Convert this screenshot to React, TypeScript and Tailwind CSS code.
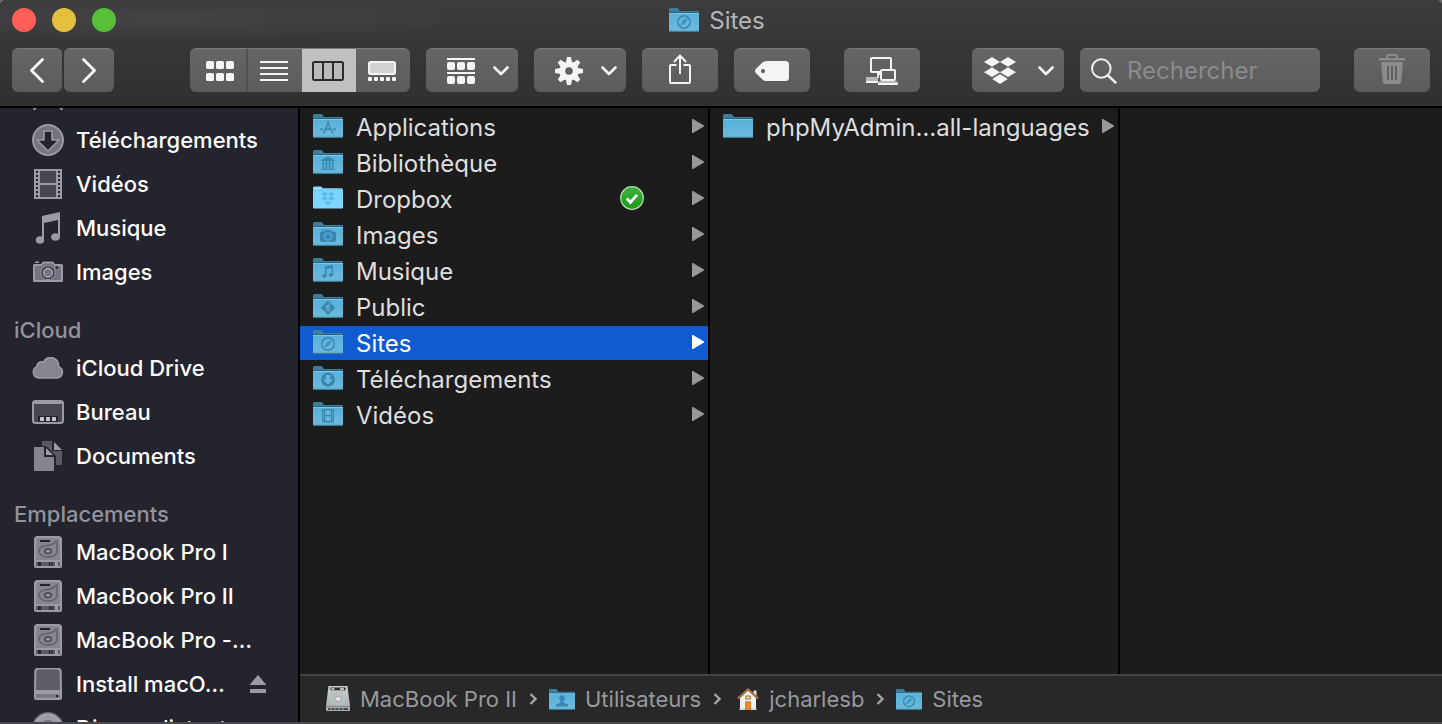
import type { ReactNode } from "react";

type Emblem =
  | "apps" | "library" | "dropbox" | "camera" | "music"
  | "public" | "compass" | "download" | "film" | "user" | "none";

function SharedGradients() {
  return (
    <svg width="0" height="0" className="absolute" aria-hidden="true">
      <defs>
        <linearGradient id="folderFront" x1="0" y1="0" x2="0" y2="1">
          <stop offset="0" stopColor="#55b1da" />
          <stop offset="0.85" stopColor="#6bb9db" />
          <stop offset="1" stopColor="#5aa0c0" />
        </linearGradient>
        <linearGradient id="folderBright" x1="0" y1="0" x2="0" y2="1">
          <stop offset="0" stopColor="#78d3fd" />
          <stop offset="1" stopColor="#80d7ff" />
        </linearGradient>
        <linearGradient id="syncGreen" x1="0" y1="0" x2="0" y2="1">
          <stop offset="0" stopColor="#3db43a" />
          <stop offset="1" stopColor="#1f961f" />
        </linearGradient>
        <linearGradient id="diskMetal" x1="0" y1="0" x2="0" y2="1">
          <stop offset="0" stopColor="#c9cfd0" />
          <stop offset="1" stopColor="#a4acad" />
        </linearGradient>
      </defs>
    </svg>
  );
}

function EmblemShape({ kind }: { kind: Emblem }) {
  const ink = "#3a86b3";
  switch (kind) {
    case "apps":
      return (
        <g stroke={ink} strokeWidth="1.5" fill="none">
          <path d="M16 7.5 10.5 19.5M14 7.5 20 19.5M7 15.2h3.4M12 15.2h6M20 15.2h3" />
        </g>
      );
    case "library":
      return (
        <g fill={ink}>
          <path d="M15 6.4 22 10.2v1H8v-1z" />
          <path d="M9.5 12h1.7v6H9.5zM12.6 12h1.7v6h-1.7zM15.7 12h1.7v6h-1.7zM18.8 12h1.7v6h-1.7zM8.3 18.5h13.4V20H8.3z" />
        </g>
      );
    case "dropbox":
      return (
        <path
          fill="#5bb8e6"
          d="M11.7 6 15 8.1 11.7 10.2 8.4 8.1zM18.3 6l3.3 2.1-3.3 2.1L15 8.1zM11.7 10.5 15 12.600l-3.300 2.100-3.300-2.100zM18.300 10.500l3.300 2.100-3.300 2.100-3.300-2.100zM15 14.700l3.300 2.100-3.300 2.100-3.300-2.100z"
        />
      );
    case "camera":
      return (
        <g>
          <path fill={ink} d="M8.5 9.5H11l1.5-1.8h5L19 9.5h2.500q1.500 0 1.500 1.500v7.500q0 1.500-1.500 1.500h-13Q7 20 7 18.500V11q0-1.500 1.500-1.500z" />
          <path fill={ink} d="M8.500 7.500h2.200v1H8.500z" />
          <circle cx="15" cy="14.600" r="3.600" fill="none" stroke="#64b5da" strokeWidth="1.200" />
        </g>
      );
    case "music":
      return (
        <g fill={ink}>
          <path d="M12 8.600 20 7v9.500h-1.400v-6.200l-5.200 1V18H12z" />
          <ellipse cx="11.400" cy="18" rx="2.200" ry="1.900" />
          <ellipse cx="17.900" cy="16.800" rx="2.200" ry="1.900" />
        </g>
      );
    case "public":
      return (
        <g>
          <path fill={ink} d="M15 6.500 22.300 13.800 15 21.100 7.700 13.800z" />
          <path d="m12.500 17.500 2-2.500.4-3.300-2.600 1.200M15 12l2.200 1.400M14.800 15l2.500 2.700" stroke="#62b2d8" strokeWidth="1.200" fill="none" />
          <circle cx="15.800" cy="10.200" r="1" fill="#62b2d8" />
        </g>
      );
    case "compass":
      return (
        <g fill="none" stroke={ink}>
          <circle cx="15" cy="14" r="6.200" strokeWidth="1.500" />
          <path d="m17.800 11-3.700 2.100-2 3.900 3.700-2.100z" strokeWidth="1" />
          <circle cx="15" cy="14" r=".5" fill={ink} />
        </g>
      );
    case "download":
      return (
        <g>
          <circle cx="15" cy="13.800" r="7" fill={ink} />
          <path fill="#67b8dc" d="M13 9h4v4.400h3L15 18.600l-5-5.200h3z" />
        </g>
      );
    case "film":
      return (
        <g>
          <path fill={ink} d="M9 7h12v13.500H9z" />
          <path fill="#62b5db" d="M12.200 8.200h5.600v4.700h-5.600zM12.200 14.200h5.600v4.900h-5.600z" />
          <path d="M10.500 8v12M19.500 8v12" stroke="#62b5db" strokeWidth="1.200" strokeDasharray="1.300 1.300" />
        </g>
      );
    case "user":
      return (
        <path fill={ink} d="M15 7.200c2 0 3.100 1.500 3.100 3.500 0 1.500-.7 2.700-1.500 3.500v1.400l4.200 1.700c.9.500 1.200 1.300 1.300 2.700H7.900c.1-1.400.4-2.200 1.300-2.700l4.200-1.700v-1.400c-.8-.8-1.500-2-1.500-3.500 0-2 1.100-3.500 3.100-3.500z" />
      );
    default:
      return null;
  }
}

function Folder({ emblem, small = false }: { emblem: Emblem; small?: boolean }) {
  const bright = emblem === "dropbox";
  return (
    <svg viewBox="0 0 30 24" className={small ? "h-[21px] w-[26px] shrink-0" : "h-6 w-[30px] shrink-0"} aria-hidden="true">
      {bright ? (
        <>
          <path fill="#8adcff" d="M0 2q0-1.500 1.500-1.500h6.500L10 2.300h18.500Q30 2.300 30 3.800V12H0z" />
          <path fill="url(#folderBright)" d="M0 4h30v17.500q0 1-1 1H1q-1 0-1-1z" />
          <path fill="#4e9fc8" d="M0 4h9l2-1h19v.8H11.500L9.500 4.800H0z" opacity=".45" />
        </>
      ) : (
        <>
          <path fill="#3f7d9d" d="M0 1.500Q0 0 1.500 0H8q1 0 1.700 1L10.800 3H29q1 0 1 1v6H0z" />
          <path fill="#2f617c" d="M0 4h30v1.200H0z" />
          <path fill="url(#folderFront)" d="M0 5h30v17.500q0 1.500-1.500 1.500h-27Q0 24 0 22.500z" />
          <path fill="#7ac9ea" d="M0 5h30v1H0z" />
          <path fill="#3f7a97" d="M0 22.600q0 1.400 1.500 1.400h27q1.500 0 1.500-1.400v.1q-.5.400-1.500.4h-27q-1 0-1.500-.4z" />
        </>
      )}
      <EmblemShape kind={emblem} />
    </svg>
  );
}

function Chevron() {
  return (
    <svg viewBox="0 0 16 10" className="h-[10px] w-4" aria-hidden="true">
      <path d="m1.500 1.500 6.500 6.500 6.500-6.500" fill="none" stroke="#f4f4f6" strokeWidth="2.600" strokeLinecap="round" strokeLinejoin="round" />
    </svg>
  );
}

const toolStyle =
  "flex h-11 shrink-0 items-center justify-center rounded-md border-t border-[#7a7a7c] bg-linear-to-b from-[#656567] to-[#5c5c5e]";

function ToolButton({ label, className, children }: { label: string; className: string; children: ReactNode }) {
  return (
    <button type="button" aria-label={label} className={`${toolStyle} ${className}`}>
      {children}
    </button>
  );
}

function Toolbar() {
  const ink = "#f4f4f6";
  return (
    <div className="flex items-center px-3">
      <div className="mr-[76px] flex gap-0.5">
        <ToolButton label="Précédent" className="w-[50px]">
          <svg viewBox="0 0 50 44" className="h-11 w-[50px]">
            <path d="M30.500 10.500 19.500 21.500l11 11" fill="none" stroke="#fff" strokeWidth="2.800" strokeLinecap="round" strokeLinejoin="round" />
          </svg>
        </ToolButton>
        <ToolButton label="Suivant" className="w-[50px]">
          <svg viewBox="0 0 50 44" className="h-11 w-[50px]">
            <path d="m19.500 10.500 11 11-11 11" fill="none" stroke="#fff" strokeWidth="2.800" strokeLinecap="round" strokeLinejoin="round" />
          </svg>
        </ToolButton>
      </div>

      <div className={`${toolStyle} mr-4 overflow-hidden`} role="group" aria-label="Présentation">
        <button type="button" aria-label="Icônes" className="flex h-11 w-[58px] items-center justify-center border-r-2 border-[#515153]">
          <svg viewBox="0 0 28 20" className="ml-1 h-5 w-7" fill={ink}>
            {[0, 10, 20].map((x) =>
              [0, 12].map((y) => <rect key={`${x}-${y}`} x={x} y={y} width="8" height="8" rx="1.500" />),
            )}
          </svg>
        </button>
        <button type="button" aria-label="Liste" className="flex h-11 w-[54px] items-center justify-center pr-0.5">
          <svg viewBox="0 0 28 20" className="h-5 w-7" fill={ink}>
            {[0, 6, 12, 18].map((y) => <rect key={y} y={y} width="28" height="2" />)}
          </svg>
        </button>
        <button type="button" aria-label="Colonnes" aria-pressed="true" className="flex h-11 w-[54px] items-center justify-center bg-[#c0c0c2] pr-0.5">
          <svg viewBox="0 0 32 20" className="h-5 w-8">
            <rect x="1" y="1" width="30" height="18" rx="1.500" fill="#b9b9bb" stroke="#2b2b2d" strokeWidth="2" />
            <path d="M11 1v18M21 1v18" stroke="#2b2b2d" strokeWidth="2" />
          </svg>
        </button>
        <button type="button" aria-label="Galerie" className="flex h-11 w-[54px] items-center justify-center pr-0.5">
          <svg viewBox="0 0 28 20" className="h-5 w-7">
            <rect x="1" y="1" width="26" height="12" rx="1.500" fill="#d3d3d5" stroke={ink} strokeWidth="2" />
            {[0, 6, 12, 18, 24].map((x) => <rect key={x} x={x} y="16" width="4" height="4" rx="1" fill={ink} />)}
          </svg>
        </button>
      </div>

      <ToolButton label="Regrouper" className="mr-4 w-[92px] gap-[18px]">
        <svg viewBox="0 0 28 26" className="ml-3 h-[26px] w-7" fill={ink}>
          <path d="M0 0h28v2H0zM0 14h28v2H0z" />
          {[0, 10, 20].map((x) =>
            [4, 18].map((y) => <rect key={`${x}-${y}`} x={x} y={y} width="8" height="8" rx="2" />),
          )}
        </svg>
        <Chevron />
      </ToolButton>

      <ToolButton label="Actions" className="mr-4 w-[92px] gap-[18px]">
        <svg viewBox="-14 -14 28 28" className="ml-3 h-7 w-7">
          {[0, 45, 90, 135].map((a) => (
            <path key={a} d="M-2-14h4L3-9V9L2 14h-4L-3 9V-9z" fill={ink} transform={`rotate(${a})`} />
          ))}
          <circle r="9.600" fill={ink} />
          <circle r="3.800" fill="#606062" />
        </svg>
        <Chevron />
      </ToolButton>

      <ToolButton label="Partager" className="mr-4 w-[76px]">
        <svg viewBox="0 0 24 30" className="mb-1 h-[30px] w-6" fill="none" stroke={ink} strokeWidth="2" strokeLinejoin="round">
          <path d="M8.500 11H3q-1 0-1 1v16q0 1 1 1h18q1 0 1-1V12q0-1-1-1h-5.500" />
          <path d="M12 20V1.500M6 8l6-6.500L18 8" />
        </svg>
      </ToolButton>

      <ToolButton label="Tags" className="mr-[34px] w-[76px]">
        <svg viewBox="0 0 34 20" className="h-5 w-[34px]">
          <path fill={ink} fillRule="evenodd" d="M11 0h19.500Q34 0 34 3.500v13Q34 20 30.500 20H11q-2 0-3.500-1.500L1 12.200Q-1 10 1 7.800L7.500 1.500Q9 0 11 0zM8 8a2.100 2.100 0 1 0 0 4.200A2.100 2.100 0 0 0 8 8z" />
        </svg>
      </ToolButton>

      <ToolButton label="Se connecter au serveur" className="mr-[52px] w-[76px]">
        <svg viewBox="0 0 32 28" className="h-7 w-8">
          <rect x="5" y="1" width="20" height="14" rx="1" fill="none" stroke={ink} strokeWidth="2" />
          <path fill={ink} d="M11 16h4v2h-2v3h-2z" />
          <path fill="#b9b9bb" d="M0 20h12v4H0z" />
          <path fill={ink} d="M0 24h12v2H0z" />
          <rect x="15" y="13" width="14" height="10" rx="1" fill="#616163" stroke={ink} strokeWidth="2" />
          <path fill="#b9b9bb" d="M13.500 24h17l1.500 2H12z" />
          <path fill={ink} d="M12 26h20v2H12z" />
        </svg>
      </ToolButton>

      <ToolButton label="Dropbox" className="mr-4 w-[92px] gap-[22px]">
        <svg viewBox="0 0 32 27" className="ml-0.5 h-[27px] w-8" fill={ink}>
          <path d="M8 0 16 5 8 9.700 0 5zM24 0l8 5-8 4.700L16 5zM8 10.300l8 4.900-8 4.800-8-4.800zM24 10.300l8 4.900-8 4.800-8-4.800zM16 17l7.800 5L16 27l-7.800-5z" />
        </svg>
        <Chevron />
      </ToolButton>

      <label className={`${toolStyle} mr-[34px] min-w-0 flex-1 gap-2.5 px-[11px]`}>
        <svg viewBox="0 0 26 26" className="h-[26px] w-[26px] shrink-0" fill="none" stroke="#ededef">
          <circle cx="10.300" cy="10.500" r="9.300" strokeWidth="2" />
          <path d="m17 17.500 7.500 7" strokeWidth="2.400" strokeLinecap="round" />
        </svg>
        <input
          type="search"
          aria-label="Rechercher"
          placeholder="Rechercher"
          className="w-full min-w-0 bg-transparent text-2xl text-white outline-none placeholder:text-[#8b8b8d]"
        />
      </label>

      <ToolButton label="Placer dans la corbeille" className="w-[76px]">
        <svg viewBox="0 0 26 30" className="mb-1 h-[30px] w-[26px]">
          <path d="M8 5V3q0-2 2-2h6q2 0 2 2v2" fill="none" stroke="#8b8b8d" strokeWidth="2" />
          <path fill="#8b8b8d" d="M0 4h26v2.500H0zM2 8h22l-1.800 20q-.2 2-2.200 2H6q-2 0-2.200-2z" />
          <path d="M9 12v14M13 12v14M17 12v14" stroke="#606062" strokeWidth="2" />
        </svg>
      </ToolButton>
    </div>
  );
}

const side = "#9c9ba5";

function DownloadIcon() {
  return (
    <svg viewBox="0 0 32 32" className="h-8 w-8">
      <circle cx="16" cy="16" r="15" fill="#757581" stroke={side} strokeWidth="2" />
      <path d="M12 7h8v9h7L16 27 5 16h7z" fill="#24242e" stroke={side} strokeWidth="1.600" strokeLinejoin="round" />
    </svg>
  );
}

function FilmIcon() {
  return (
    <svg viewBox="0 0 28 30" className="h-[30px] w-7">
      <path fill={side} d="M0 0h28v30H0z" />
      <path fill="#474751" d="M6 2h16v12H6zM6 16h16v12H6z" />
      <path d="M3 2v26M25 2v26" stroke="#24242e" strokeWidth="2" strokeDasharray="2 2" />
    </svg>
  );
}

function MusicIcon() {
  return (
    <svg viewBox="0 0 26 32" className="h-8 w-[26px]" fill={side}>
      <path d="M7 4 25 0v25h-2V8L9 11v16H7z" />
      <ellipse cx="5" cy="28" rx="4.200" ry="3.800" />
      <ellipse cx="20.500" cy="25" rx="4.500" ry="3.800" />
    </svg>
  );
}

function CameraIcon() {
  return (
    <svg viewBox="0 0 30 22" className="h-[22px] w-[30px]">
      <path fill={side} d="M1.500 3H8l2-2.500h10L22 3h6.500Q30 3 30 4.500v15q0 1.500-1.500 1.500h-27Q0 21 0 19.500v-15Q0 3 1.500 3z" />
      <path fill="#757581" d="M2 5h6.500l2-2.500h9L22 5h6v14H2z" />
      <path fill={side} d="M2 .5h4v1.500H2z" />
      <circle cx="15" cy="11.700" r="7" fill="#24242e" stroke={side} strokeWidth="1" />
      <circle cx="15" cy="11.700" r="4.400" fill="#757581" stroke={side} strokeWidth="2" />
      <circle cx="24" cy="6.500" r="1.200" fill="#24242e" />
    </svg>
  );
}

function CloudIcon() {
  return (
    <svg viewBox="0 0 32 22" className="h-[22px] w-8">
      <path d="M7 21A6 6 0 0 1 4.800 9.600 A4.800 4.800 0 0 1 11.300 5.200 A8 8 0 0 1 26.500 9.800 A5.800 5.800 0 0 1 25.500 21z" fill="#858590" stroke={side} strokeWidth="1.600" />
    </svg>
  );
}

function DesktopIcon() {
  return (
    <svg viewBox="0 0 32 24" className="h-6 w-8">
      <rect x="1" y="1" width="30" height="22" rx="2.500" fill="#474751" stroke={side} strokeWidth="2" />
      <path fill={side} d="M2 1h28v3H2z" />
      <path fill="#24242e" d="M6 16h20v6H6z" />
      <path fill="#c3c3cb" d="M8 17h4v4H8zM14 17h4v4h-4zM20 17h4v4h-4z" />
    </svg>
  );
}

function DocumentsIcon() {
  return (
    <svg viewBox="0 0 28 30" className="h-[30px] w-7">
      <path fill="#5a5a65" d="M8 0h10v10h10v14H8z" />
      <path fill={side} d="m20 1 8 8h-8z" />
      <path fill="#24242e" d="M0 5h12l10 10v15H0z" />
      <path fill="#858590" d="M0 6h10v10h10v14H0z" />
      <path fill={side} d="m12 7 7 7h-7z" />
    </svg>
  );
}

function HardDiskIcon() {
  return (
    <svg viewBox="0 0 28 32" className="h-8 w-7">
      <path fill={side} d="M3.500 0h21Q28 0 28 3.500V30q0 2-2 2H2q-2 0-2-2V3.500Q0 0 3.500 0z" />
      <path fill="#858590" d="M4.500 2h19Q25.500 2 25.600 4L26 24H2L2.400 4Q2.500 2 4.500 2z" />
      <path fill="#24242e" d="M6 4h10v2H6z" />
      <path d="M23 5v10c0 4-4 6-9 6s-9-2.500-9-6 4-5.500 9-5.500q3 0 9-4.500z" fill="none" stroke="#63636e" strokeWidth="1.600" strokeLinejoin="round" />
      <ellipse cx="14" cy="15.200" rx="3.200" ry="2.200" fill={side} stroke="#4f4f5a" strokeWidth="1.800" />
      <path fill="#5a5a65" d="M2 26h24v4H2z" />
      <path fill="#24242e" d="M4 26h3v4H4zM15 26h1.300v4H15zM17.500 26h1.300v4h-1.300z" />
      <path fill={side} d="M21 26h3v4h-3z" />
    </svg>
  );
}

function ExternalDiskIcon() {
  return (
    <svg viewBox="0 0 28 32" className="h-8 w-7">
      <path fill={side} d="M3.500 0h21q3 0 3.200 3L28 24v6q0 2-2 2H2q-2 0-2-2v-6L.3 3q.2-3 3.200-3z" />
      <path fill="#5e5e69" d="M4.500 1.500h19q1.900 0 2 1.500l.5 19H2L2.500 3q.1-1.500 2-1.500z" />
      <path fill="#7b7b86" d="M2 26h24v3.500q0 .5-1 .5H3q-1 0-1-.5z" />
      <path fill="#24242e" d="M22 27h2v2h-2z" />
    </svg>
  );
}

function DiscIcon() {
  return (
    <svg viewBox="0 0 32 32" className="h-8 w-8">
      <circle cx="16" cy="16" r="15.300" fill={side} stroke="#6a6a75" strokeWidth="1.400" />
      <circle cx="16" cy="16" r="13.500" fill="none" stroke="#b0b0b8" strokeWidth="1" />
      <circle cx="16" cy="16" r="7" fill="#3d3d48" stroke="#757581" strokeWidth="2" />
    </svg>
  );
}

function AppsIcon() {
  return (
    <svg viewBox="0 0 32 32" className="h-8 w-8" fill="none" stroke={side} strokeWidth="2">
      <path d="M19 2 2 30M13 2l17 28M2 20h28" />
    </svg>
  );
}

function SideRow({ icon, label, ejectable = false }: { icon: ReactNode; label?: string; ejectable?: boolean }) {
  return (
    <li className="flex h-11 items-center pl-8 pr-[31px]">
      <span className="mr-3 flex w-8 shrink-0 justify-center">{icon}</span>
      {label && <a href="#" className="min-w-0 flex-1 whitespace-nowrap text-[22px] font-medium text-white">{label}</a>}
      {ejectable && (
        <button type="button" aria-label="Éjecter">
          <svg viewBox="0 0 18 18" className="h-[18px] w-[18px]" fill={side}>
            <path d="M9 0 17.500 10H.5zM1 14h16v4H1z" />
          </svg>
        </button>
      )}
    </li>
  );
}

function SideHeading({ children }: { children: ReactNode }) {
  return <h2 className="flex h-[52px] items-end pb-0.5 pl-3.5 text-[22px] leading-7 font-medium text-[#94939d]">{children}</h2>;
}

function Sidebar() {
  return (
    <nav aria-label="Barre latérale" className="w-[300px] shrink-0 overflow-hidden border-r-2 border-black bg-[#24242e]">
      <div className="-mt-[34px]">
        <ul>
          <SideRow icon={<AppsIcon />} />
          <SideRow icon={<DownloadIcon />} label="Téléchargements" />
          <SideRow icon={<FilmIcon />} label="Vidéos" />
          <SideRow icon={<MusicIcon />} label="Musique" />
          <SideRow icon={<CameraIcon />} label="Images" />
        </ul>
        <SideHeading>iCloud</SideHeading>
        <ul>
          <SideRow icon={<CloudIcon />} label="iCloud Drive" />
          <SideRow icon={<DesktopIcon />} label="Bureau" />
          <SideRow icon={<DocumentsIcon />} label="Documents" />
        </ul>
        <SideHeading>Emplacements</SideHeading>
        <ul>
          <SideRow icon={<HardDiskIcon />} label="MacBook Pro I" />
          <SideRow icon={<HardDiskIcon />} label="MacBook Pro II" />
          <SideRow icon={<HardDiskIcon />} label="MacBook Pro -…" />
          <SideRow icon={<ExternalDiskIcon />} label="Install macO…" ejectable />
          <SideRow icon={<DiscIcon />} label="Disque distant" />
        </ul>
      </div>
    </nav>
  );
}

function ColumnRow({ emblem, label, selected = false, synced = false }: { emblem: Emblem; label: string; selected?: boolean; synced?: boolean }) {
  return (
    <li>
      <a
        href="#"
        aria-current={selected ? "true" : undefined}
        className={`flex h-[34px] items-center pb-0.5 pl-[13px] pr-1 text-2xl ${selected ? "bg-[#0f5bd0] text-white" : "text-[#dededf]"}`}
      >
        <Folder emblem={emblem} />
        <span className="ml-[13px] flex-1 pt-1 leading-7 whitespace-nowrap">{label}</span>
        {synced && (
          <svg viewBox="0 0 24 24" className="mr-12 h-6 w-6" role="img" aria-label="Synchronisé">
            <circle cx="12" cy="12" r="11.300" fill="url(#syncGreen)" stroke="#b9e3b4" strokeWidth="1.200" />
            <path d="m6.800 12.500 3.600 3.800 6.600-7.500" fill="none" stroke="#fff" strokeWidth="2.800" />
          </svg>
        )}
        <svg viewBox="0 0 12 14" className="h-3.5 w-3" aria-hidden="true">
          <path d="M0 0h1l11 6.500v1L1 14H0z" fill={selected ? "#fff" : "#989898"} />
        </svg>
      </a>
    </li>
  );
}

function PathArrow() {
  return (
    <svg viewBox="0 0 8 12" className="h-3 w-2 shrink-0" aria-hidden="true">
      <path d="m1.500 1 5 5-5 5" fill="none" stroke="#a3a3a5" strokeWidth="2.400" />
    </svg>
  );
}

function PathBar() {
  return (
    <nav aria-label="Chemin" className="flex h-12 shrink-0 items-center gap-3 border-t-2 border-[#434345] bg-[#28282a] pl-[26px] text-[22px] text-[#99999b]">
      <a href="#" className="flex items-center gap-2.5 whitespace-nowrap">
        <svg viewBox="0 0 24 26" className="h-[26px] w-6 shrink-0" aria-hidden="true">
          <path fill="url(#diskMetal)" d="M2.500 0h19L24 20v4q0 1-1 1H1q-1 0-1-1v-4z" />
          <path fill="#2a2c2c" d="M4.500 1.500h15v2.800h-15z" />
          <path fill="#e3e7e7" d="M5.500 2.300h3v1.400h-3zM14 2.300h4v1.400h-4z" />
          <ellipse cx="12" cy="12.500" rx="8.500" ry="6.500" fill="#b9c0c1" />
          <ellipse cx="12" cy="13" rx="3.400" ry="2.700" fill="#dde1e2" stroke="#8d9596" strokeWidth=".8" />
          <path fill="#7c8485" d="M0 20h24v1H0z" />
          <path fill="#454a4b" d="M2 22h20v2H2z" />
          <path d="M4 23h16" stroke="#9aa1a2" strokeWidth="1.500" strokeDasharray="1.500 2.500" />
        </svg>
        MacBook Pro II
      </a>
      <PathArrow />
      <a href="#" className="flex items-center gap-2.5">
        <Folder emblem="user" small />
        Utilisateurs
      </a>
      <PathArrow />
      <a href="#" className="ml-1 flex items-center gap-2.5">
        <svg viewBox="0 0 22 22" className="h-[22px] w-[22px] shrink-0" aria-hidden="true">
          <path fill="#e4e4e4" d="M16.500 2.500h3v6h-3z" />
          <path fill="#f0f0ee" d="M3 10 11 2.500 19 10v12H3z" />
          <path fill="#d2d2d0" d="M2.500 20.300h17V22h-17z" />
          <path d="m.8 10.500 10.200-9 10.200 9" fill="none" stroke="#a9743f" strokeWidth="2.200" />
          <path fill="#f4ddc0" stroke="#a9743f" strokeWidth="1.200" d="M9 8h4.200v3H9z" />
          <path fill="#f08a24" stroke="#c26f1c" strokeWidth=".8" d="M8.600 13.800h5V22h-5z" />
        </svg>
        jcharlesb
      </a>
      <PathArrow />
      <a href="#" className="flex items-center gap-2.5">
        <Folder emblem="compass" small />
        Sites
      </a>
    </nav>
  );
}

export default function App() {
  return (
    <div className="bg-[#6d6d6e]">
      <SharedGradients />
      <div className="flex h-screen flex-col overflow-hidden rounded-t-md border-b-2 border-[#4a4a4c] bg-[#1c1c1d] font-['Inter','Liberation_Sans',sans-serif]">
        <header className="flex shrink-0 flex-col border-b-2 border-black bg-[radial-gradient(ellipse_at_170px_20px,rgba(255,255,255,0.05),transparent_320px),linear-gradient(#3c3c3e,#303031)] pb-3.5">
          <div className="grid h-12 grid-cols-[1fr_auto_1fr] items-center pr-5 pb-2 pl-3">
            <div className="flex gap-4">
              <button type="button" aria-label="Fermer" className="h-6 w-6 rounded-full bg-[#ff5d58]" />
              <button type="button" aria-label="Réduire" className="h-6 w-6 rounded-full bg-[#e5bf3e]" />
              <button type="button" aria-label="Agrandir" className="h-6 w-6 rounded-full bg-[#58c038]" />
            </div>
            <h1 className="flex items-center gap-2.5 text-2xl text-[#b5b5b7]">
              <Folder emblem="compass" />
              <span className="pt-0.5">Sites</span>
            </h1>
          </div>
          <Toolbar />
        </header>
        <div className="flex min-h-0 flex-1">
          <Sidebar />
          <div className="flex min-w-0 flex-1 flex-col">
            <main className="flex min-h-0 flex-1">
              <ul className="flex w-[410px] shrink-0 flex-col gap-0.5 border-r-2 border-black pt-0.5">
                <ColumnRow emblem="apps" label="Applications" />
                <ColumnRow emblem="library" label="Bibliothèque" />
                <ColumnRow emblem="dropbox" label="Dropbox" synced />
                <ColumnRow emblem="camera" label="Images" />
                <ColumnRow emblem="music" label="Musique" />
                <ColumnRow emblem="public" label="Public" />
                <ColumnRow emblem="compass" label="Sites" selected />
                <ColumnRow emblem="download" label="Téléchargements" />
                <ColumnRow emblem="film" label="Vidéos" />
              </ul>
              <ul className="w-[410px] shrink-0 border-r-2 border-black pt-0.5">
                <ColumnRow emblem="none" label="phpMyAdmin…all-languages" />
              </ul>
              <div className="flex-1" />
            </main>
            <PathBar />
          </div>
        </div>
      </div>
    </div>
  );
}
